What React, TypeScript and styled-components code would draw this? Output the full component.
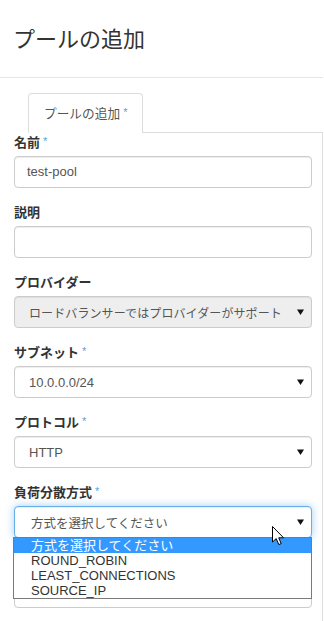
import styled, { createGlobalStyle } from "styled-components"

const GlobalStyle = createGlobalStyle`
    body {
        margin: 0;
        background: #fff;
        font-family: "Liberation Sans", "Noto Sans CJK JP", sans-serif;
        color: #333;
    }
`

type Field = {
    label: string
    required?: boolean
    kind: 'input' | 'select'
    value?: string
    disabled?: boolean
    focused?: boolean
    options?: string[]
}

const fields: Field[] = [
    { label: '名前', required: true, kind: 'input', value: 'test-pool' },
    { label: '説明', kind: 'input', value: '' },
    { label: 'プロバイダー', kind: 'select', value: 'ロードバランサーではプロバイダーがサポート', disabled: true },
    { label: 'サブネット', required: true, kind: 'select', value: '10.0.0.0/24' },
    { label: 'プロトコル', required: true, kind: 'select', value: 'HTTP' },
    {
        label: '負荷分散方式', required: true, kind: 'select', value: '方式を選択してください', focused: true,
        options: ['方式を選択してください', 'ROUND_ROBIN', 'LEAST_CONNECTIONS', 'SOURCE_IP'],
    },
    // label of this one sits under the open list
    { label: '', kind: 'input', value: '' },
]

function Arrow() {
    return (
        <svg width="7" height="6" viewBox="0 0 7 6">
            <path d="M0 0.5 L7 0.5 L3.5 6 Z" fill="#111" />
        </svg>
    )
}

function Cursor() {
    return (
        <svg width="13" height="20" viewBox="0 0 13 20">
            <path d="M0.5 0.5 L0.5 16 L4.2 12.6 L6.8 18.6 L9.2 17.6 L6.7 11.8 L11.6 11.8 Z"
                fill="#fff" stroke="#000" strokeWidth="1" strokeLinejoin="round" />
        </svg>
    )
}

function App() {
    return (
        <Page>
            <GlobalStyle />
            <Header>プールの追加</Header>
            <TabBar>
                <Tab>プールの追加<Star>*</Star></Tab>
                <TabFill />
            </TabBar>
            <Panel>
                {fields.map((f, n) => (
                    <Group key={'field' + n}>
                        <Label>{f.label}{f.required ? <Star>*</Star> : null}</Label>
                        {f.kind === 'input'
                            ? <Input>{f.value}</Input>
                            : (
                                <Select disabled={f.disabled} focused={f.focused}>
                                    <span>{f.value}</span>
                                    <Arrow />
                                    {f.options ? (
                                        <>
                                            <Pointer><Cursor /></Pointer>
                                            <OptionList>
                                                {f.options.map((o, i) => (
                                                    <OptionItem key={'opt' + i} active={i === 0}>{o}</OptionItem>
                                                ))}
                                            </OptionList>
                                        </>
                                    ) : null}
                                </Select>
                            )}
                    </Group>
                ))}
            </Panel>
        </Page>
    )
}

export default App

//#region Styles
const Page = styled.div`
    width: 323px;
    height: 621px;
    overflow: hidden;
`

const Header = styled.h1`
    margin: 0;
    padding: 25px 13px 22px;
    height: 30px;
    font-size: 22px;
    line-height: 30px;
    font-weight: normal;
    color: #333;
    border-bottom: 1px solid #e5e5e5;
`

const TabBar = styled.div`
    display: flex;
    margin-top: 15px;
    padding-left: 28px;
    height: 40px;
`

const Tab = styled.div`
    box-sizing: border-box;
    height: 40px;
    padding: 11px 15px 0;
    border: 1px solid #ddd;
    border-bottom: none;
    border-radius: 4px 4px 0 0;
    font-size: 12.7px;
    line-height: 18px;
    color: #555;
`

const TabFill = styled.div`
    flex: 1;
    border-bottom: 1px solid #ddd;
`

const Panel = styled.div`
    border-right: 1px solid #ddd;
    padding: 1px 10px 0 14px;
    min-height: 500px;
`

const Group = styled.div`
    margin-bottom: 16px;
`

const Label = styled.div`
    height: 17px;
    font-size: 13px;
    line-height: 17px;
    font-weight: bold;
    color: #333;
    margin-bottom: 5px;
    white-space: nowrap;
`

const Star = styled.span`
    color: #5d9fd8;
    font-weight: normal;
    font-size: 11px;
    margin-left: 3px;
    line-height: 0;
    vertical-align: 2px;
`

const Input = styled.div`
    box-sizing: border-box;
    height: 32px;
    padding: 0 12px;
    border: 1px solid #ccc;
    border-radius: 4px;
    font-size: 13px;
    line-height: 30px;
    color: #555;
    box-shadow: inset 0 1px 1px rgba(0, 0, 0, 0.075);
`

const Select = styled.div<{ disabled?: boolean, focused?: boolean }>`
    position: relative;
    box-sizing: border-box;
    height: 32px;
    display: flex;
    align-items: center;
    justify-content: space-between;
    padding: 0 7px 0 14px;
    border: 1px solid ${props => props.focused ? '#66afe9' : '#ccc'};
    border-radius: 4px;
    background: ${props => props.disabled ? '#eee' : '#fff'};
    font-size: ${props => props.disabled ? '12px' : '13px'};
    letter-spacing: ${props => props.disabled ? '0.1px' : '0'};
    color: #555;
    box-shadow: ${props => props.focused
        ? 'inset 0 1px 1px rgba(0,0,0,.075), 0 0 8px rgba(102,175,233,.6)'
        : 'inset 0 1px 1px rgba(0,0,0,.075)'};
    span {
        padding-left: ${props => props.focused ? '2px' : '0'};
        font-size: ${props => props.focused ? '12.5px' : 'inherit'};
    }
`

const OptionList = styled.div`
    position: absolute;
    left: -2px;
    right: -1px;
    top: 30px;
    z-index: 2;
    background: #fff;
    border: 1px solid #7a7a7a;
`

const OptionItem = styled.div<{ active?: boolean }>`
    padding-left: 17px;
    height: 15px;
    font-size: 13px;
    line-height: 15px;
    color: ${props => props.active ? '#fff' : '#333'};
    background: ${props => props.active ? '#3399ff' : '#fff'};
`

const Pointer = styled.div`
    position: absolute;
    left: 257px;
    top: 19px;
    z-index: 3;
    line-height: 0;
`
//#endregion
